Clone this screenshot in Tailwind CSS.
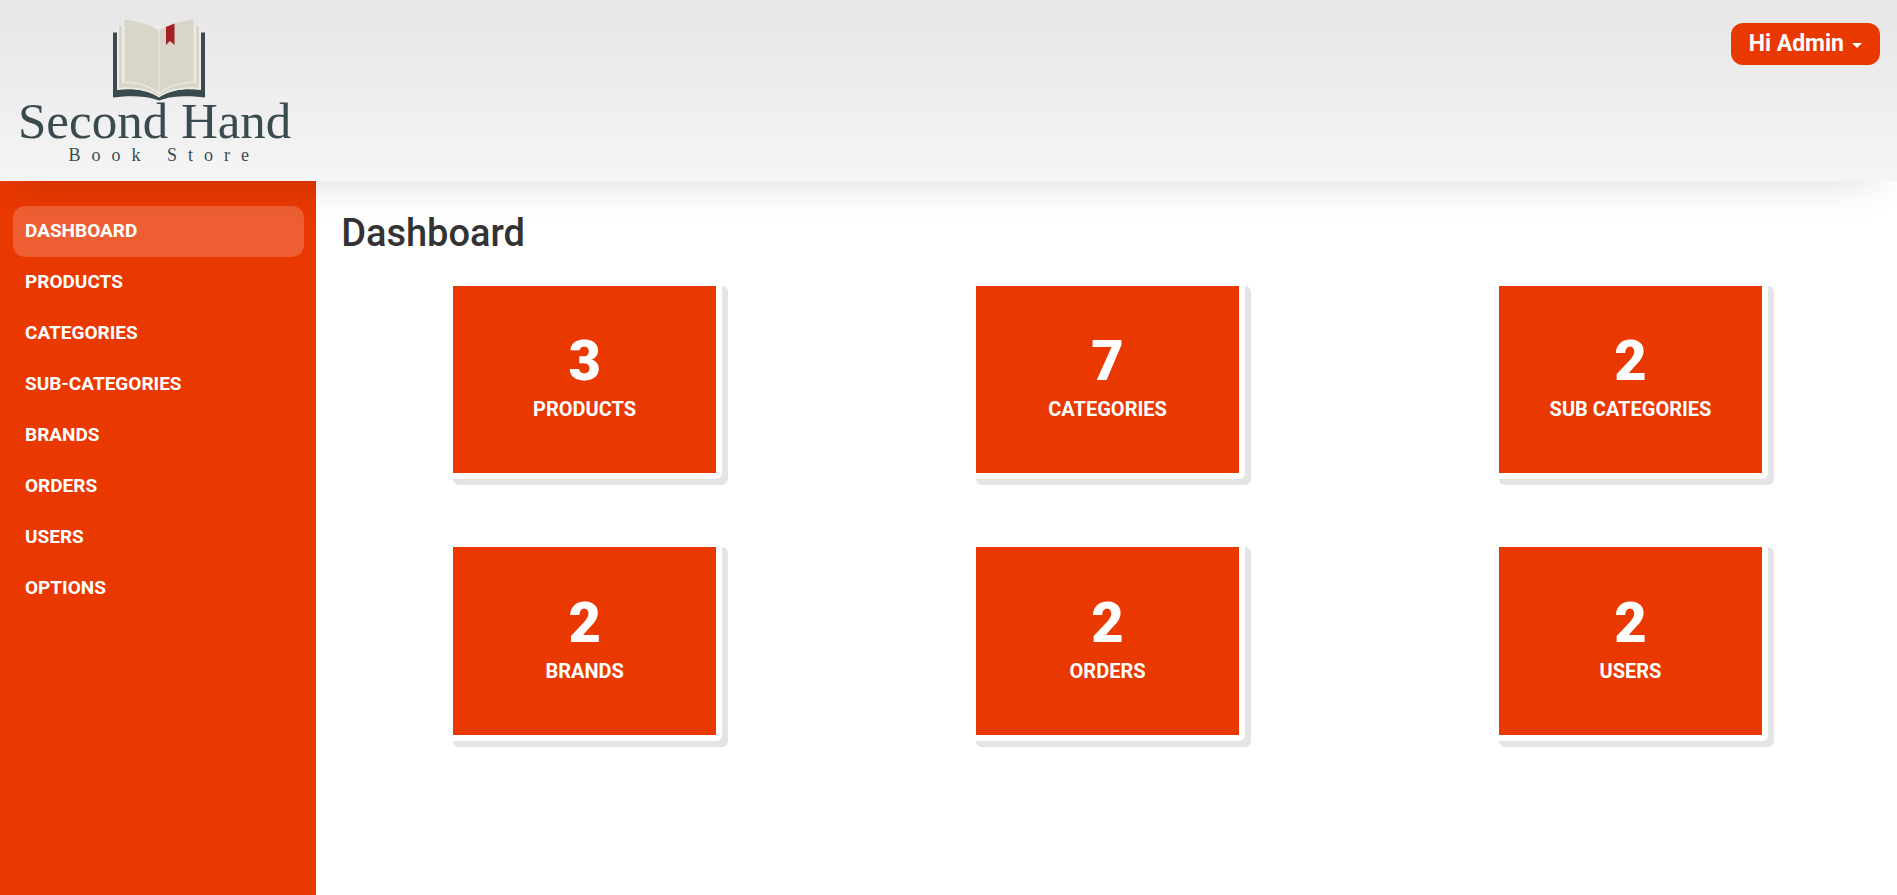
<!DOCTYPE html>
<html lang="en">
<head>
<meta charset="utf-8">
<meta name="viewport" content="width=device-width, initial-scale=1">
<title>Dashboard</title>
<script src="https://cdn.jsdelivr.net/npm/@tailwindcss/browser@4"></script>
</head>
<body class="flex min-h-screen flex-col bg-white font-['Roboto',sans-serif] text-[#333]">
<header class="relative z-10 flex items-start justify-between bg-linear-to-b from-[#e6e6e6] to-[#f5f5f5] pr-[17px] pl-[18px] shadow-[0_20px_40px_-20px_rgba(0,0,0,0.15)]">
  <a href="#" class="flex h-[181px] flex-col items-center pt-[18px] font-['Liberation_Serif',serif] text-[#3a4b50]">
    <svg class="h-[83px] w-[94px]" viewBox="0 0 94 83" aria-hidden="true">
      <path fill="#3a4b50" d="M1 14.500H5V71.500C22 70 35 72 47 79C59 72 72 70 89 71.500V14.500H93V79.500C75 77.500 61 78 52 81L47 82.500L42 81C33 78 19 77.500 1 79.500Z"/>
      <path fill="#eeece6" d="M5 8H89V72C72 70 58 72 47 79.500C36 72 22 70 5 72Z"/>
      <path fill="#d9d5c9" d="M7 8H10V65C25 64.500 37 68 47 76.500C57 68 69 64.500 84 65V8H87V70C70 68.500 57 71 47 78C37 71 24 68.500 7 70Z"/>
      <path fill="#d9d5c9" stroke="#ebe9e2" stroke-width="1" d="M12 1C25 2.500 37 6 47 12C57 6 69 2.500 82 1V64C68 64.500 57 67.500 47 75C37 67.500 26 64.500 12 64Z"/>
      <path stroke="#e3e0d6" stroke-width="2" d="M47 12V74"/>
      <path fill="#a32024" d="M54 9L62.500 5.500V27L58 23L54 27Z"/>
    </svg>
    <span class="pr-2 text-[51px] leading-[40px]">Second Hand</span>
    <span class="pt-1 pl-[11px] text-[18px] leading-5 tracking-[11px]">Book Store</span>
  </a>
  <button type="button" class="mt-[23px] flex h-[42px] items-center gap-2 rounded-xl bg-[#e93800] px-[18px] pb-0.5 text-[23px] leading-none font-bold text-white">
    Hi Admin
    <svg class="mt-1 h-[5px] w-[10px]" viewBox="0 0 10 5" aria-hidden="true"><path fill="currentColor" d="M0 0H10L5 5Z"/></svg>
  </button>
</header>
<div class="flex grow">
  <nav aria-label="Main" class="w-1/6 bg-[#e93800] pt-[25px] pr-3 pl-[13px] text-[19px] font-bold text-white uppercase">
    <ul>
      <li><a href="#" aria-current="page" class="block rounded-xl bg-white/20 px-3 pb-px leading-[50px]">Dashboard</a></li>
      <li><a href="#" class="block px-3 pb-px leading-[50px]">Products</a></li>
      <li><a href="#" class="block px-3 pb-px leading-[50px]">Categories</a></li>
      <li><a href="#" class="block px-3 pb-px leading-[50px]">Sub-Categories</a></li>
      <li><a href="#" class="block px-3 pb-px leading-[50px]">Brands</a></li>
      <li><a href="#" class="block px-3 pb-px leading-[50px]">Orders</a></li>
      <li><a href="#" class="block px-3 pb-px leading-[50px]">Users</a></li>
      <li><a href="#" class="block px-3 pb-px leading-[50px]">Options</a></li>
    </ul>
  </nav>
  <main class="w-5/6 pt-8">
    <h1 class="pl-[25px] text-[38px] leading-10 font-medium">Dashboard</h1>
    <div class="mt-[33px] grid grid-cols-3 justify-items-center gap-y-[62px] pr-[5px] pl-[7px] font-bold text-white uppercase">
      <div class="-mr-3 w-[275px] rounded-md bg-[#e4e4e4] pr-1.5 pb-1.5"><div class="rounded-br-md bg-white pr-1.5 pb-1.5"><section class="flex h-[187px] flex-col items-center bg-[#e93800] pt-[43px]"><strong class="text-[56px] leading-[64px]">3</strong><span class="text-xl leading-8">Products</span></section></div></div>
      <div class="-mr-3 w-[275px] rounded-md bg-[#e4e4e4] pr-1.5 pb-1.5"><div class="rounded-br-md bg-white pr-1.5 pb-1.5"><section class="flex h-[187px] flex-col items-center bg-[#e93800] pt-[43px]"><strong class="text-[56px] leading-[64px]">7</strong><span class="text-xl leading-8">Categories</span></section></div></div>
      <div class="-mr-3 w-[275px] rounded-md bg-[#e4e4e4] pr-1.5 pb-1.5"><div class="rounded-br-md bg-white pr-1.5 pb-1.5"><section class="flex h-[187px] flex-col items-center bg-[#e93800] pt-[43px]"><strong class="text-[56px] leading-[64px]">2</strong><span class="text-xl leading-8">Sub Categories</span></section></div></div>
      <div class="-mr-3 w-[275px] rounded-md bg-[#e4e4e4] pr-1.5 pb-1.5"><div class="rounded-br-md bg-white pr-1.5 pb-1.5"><section class="flex h-[188px] flex-col items-center bg-[#e93800] pt-11"><strong class="text-[56px] leading-[64px]">2</strong><span class="text-xl leading-8">Brands</span></section></div></div>
      <div class="-mr-3 w-[275px] rounded-md bg-[#e4e4e4] pr-1.5 pb-1.5"><div class="rounded-br-md bg-white pr-1.5 pb-1.5"><section class="flex h-[188px] flex-col items-center bg-[#e93800] pt-11"><strong class="text-[56px] leading-[64px]">2</strong><span class="text-xl leading-8">Orders</span></section></div></div>
      <div class="-mr-3 w-[275px] rounded-md bg-[#e4e4e4] pr-1.5 pb-1.5"><div class="rounded-br-md bg-white pr-1.5 pb-1.5"><section class="flex h-[188px] flex-col items-center bg-[#e93800] pt-11"><strong class="text-[56px] leading-[64px]">2</strong><span class="text-xl leading-8">Users</span></section></div></div>
    </div>
  </main>
</div>
</body>
</html>
